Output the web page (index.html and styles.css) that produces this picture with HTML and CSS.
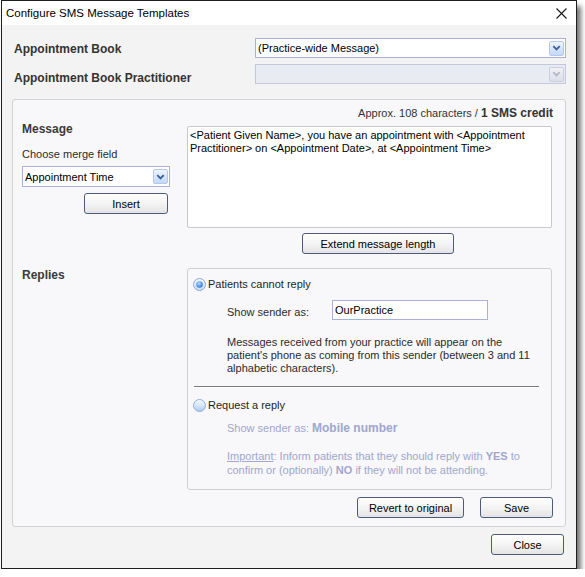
FILE: index.html
```html
<!DOCTYPE html>
<html>
<head>
<meta charset="utf-8">
<title>Configure SMS Message Templates</title>
<link rel="stylesheet" href="styles.css">
</head>
<body>
<div class="window">
  <div class="titlebar">
    <span class="title">Configure SMS Message Templates</span>
    <svg class="close" width="11" height="11" viewBox="0 0 11 11"><path d="M0.5 0.5 L10.5 10.5 M10.5 0.5 L0.5 10.5" stroke="#1a1a1a" stroke-width="1.1" fill="none"/></svg>
  </div>
  <div class="rows">
    <div class="row">
      <span class="label l1">Appointment Book</span>
      <div class="combo wide">
        <span class="combo-text">(Practice-wide Message)</span>
        <span class="drop"><svg width="9" height="6" viewBox="0 0 9 6"><path d="M1.3 1.2 L4.5 4.4 L7.7 1.2" stroke="#3f5f98" stroke-width="1.9" fill="none"/></svg></span>
      </div>
    </div>
    <div class="row">
      <span class="label l2">Appointment Book Practitioner</span>
      <div class="combo wide disabled">
        <span class="combo-text"></span>
        <span class="drop"><svg width="9" height="6" viewBox="0 0 9 6"><path d="M1.3 1.2 L4.5 4.4 L7.7 1.2" stroke="#b4b8c8" stroke-width="1.9" fill="none"/></svg></span>
      </div>
    </div>
  </div>

  <div class="panel">
    <div class="approx">Approx. 108 characters / <b>1 SMS credit</b></div>
    <div class="grid">
      <div class="msg-left">
        <div class="section-title">Message</div>
        <div class="choose">Choose merge field</div>
        <div class="combo merge">
          <span class="combo-text">Appointment Time</span>
          <span class="drop"><svg width="9" height="6" viewBox="0 0 9 6"><path d="M1.3 1.2 L4.5 4.4 L7.7 1.2" stroke="#3f5f98" stroke-width="1.9" fill="none"/></svg></span>
        </div>
        <button class="btn insert">Insert</button>
      </div>
      <div class="msg-right">
        <div class="textbox">&lt;Patient Given Name&gt;, you have an appointment with &lt;Appointment Practitioner&gt; on &lt;Appointment Date&gt;, at &lt;Appointment Time&gt;</div>
        <button class="btn extend">Extend message length</button>
      </div>

      <div class="section-title">Replies</div>
      <div class="replies-box">
        <div class="radio-row">
          <svg class="radio" width="13" height="13" viewBox="0 0 13 13">
            <defs>
              <linearGradient id="ring" x1="0" y1="0" x2="0" y2="1"><stop offset="0" stop-color="#f3f7fd"/><stop offset="1" stop-color="#c9dbf3"/></linearGradient>
              <radialGradient id="dot" cx="0.4" cy="0.35" r="0.65"><stop offset="0" stop-color="#b6dcff"/><stop offset="1" stop-color="#2c76d6"/></radialGradient>
            </defs>
            <circle cx="6.5" cy="6.5" r="6" fill="url(#ring)" stroke="#8fa8cf"/>
            <circle cx="6.5" cy="6.5" r="3.3" fill="url(#dot)"/>
          </svg>
          <span>Patients cannot reply</span>
        </div>
        <div class="sender-row">
          <span class="sender-label">Show sender as:</span>
          <div class="input">OurPractice</div>
        </div>
        <div class="note">Messages received from your practice will appear on the<br>patient's phone as coming from this sender (between 3 and 11<br>alphabetic characters).</div>
        <div class="sep"></div>
        <div class="radio-row r2">
          <svg class="radio" width="13" height="13" viewBox="0 0 13 13">
            <defs>
              <linearGradient id="ball" x1="0" y1="0" x2="0" y2="1"><stop offset="0" stop-color="#f4f9ff"/><stop offset="0.5" stop-color="#d6e6fa"/><stop offset="1" stop-color="#a9c7ee"/></linearGradient>
            </defs>
            <circle cx="6.5" cy="6.5" r="6" fill="url(#ball)" stroke="#93aed6"/>
          </svg>
          <span>Request a reply</span>
        </div>
        <div class="dim sender2">Show sender as: <b>Mobile number</b></div>
        <div class="dim important"><u>Important</u>: Inform patients that they should reply with <b>YES</b> to<br>confirm or (optionally) <b>NO</b> if they will not be attending.</div>
      </div>
    </div>
    <div class="actions">
      <button class="btn revert">Revert to original</button>
      <button class="btn save">Save</button>
    </div>
  </div>

  <div class="footer">
    <button class="btn closebtn">Close</button>
  </div>
</div>
</body>
</html>
```

FILE: styles.css
```css
body {
  margin: 0;
  background: #ffffff;
  font-family: "Liberation Sans", Arial, sans-serif;
  font-size: 11px;
  color: #2b2b2b;
}

.window {
  margin-left: 1px;
  width: 576px;
  height: 569px;
  box-sizing: border-box;
  border: 1px solid #1e1e1e;
  background: #f3f3f3;
  box-shadow: 4px 6px 5px rgba(0, 0, 0, 0.55);
  display: flex;
  flex-direction: column;
}

.titlebar {
  height: 24px;
  flex: none;
  background: #ffffff;
  display: flex;
  align-items: center;
  justify-content: space-between;
  padding: 0 9px 0 4px;
}

.title {
  font-size: 11.5px;
  color: #000000;
}

.rows {
  padding: 13px 0 0 12px;
  display: flex;
  flex-direction: column;
  gap: 6px;
}

.row {
  display: flex;
  height: 20px;
}

.label {
  width: 241px;
  flex: none;
  font-weight: bold;
  font-size: 12px;
  line-height: 14px;
  color: #333333;
  white-space: nowrap;
}

.label.l1 { padding-top: 4px; }
.label.l2 { padding-top: 7px; }

.combo {
  box-sizing: border-box;
  height: 20px;
  border: 1px solid #a9b1d8;
  background: #ffffff;
  display: flex;
  align-items: center;
}

.combo.wide { width: 311px; }

.combo.disabled {
  background: #e9ebf3;
  border-color: #c3c8de;
}

.combo-text {
  flex: 1;
  padding-left: 2px;
  color: #000000;
  white-space: nowrap;
}

.drop {
  width: 15px;
  height: 15px;
  margin-right: 1px;
  box-sizing: border-box;
  border: 1px solid #b5c8ea;
  border-radius: 2px;
  background: linear-gradient(#edf4fe, #c3d8f7);
  display: flex;
  align-items: center;
  justify-content: center;
}

.combo.disabled .drop {
  border-color: #cacedd;
  background: linear-gradient(#f0f1f6, #dcdfe9);
}

.panel {
  margin: 15px 10px 0 10px;
  height: 428px;
  box-sizing: border-box;
  border: 1px solid #d2d2d2;
  border-radius: 3px;
  background: #f8f8fa;
  padding: 6px 12px 0 9px;
}

.approx {
  text-align: right;
  line-height: 14px;
  color: #333333;
  margin-bottom: 2px;
  white-space: nowrap;
}

.approx b { font-size: 12px; }

.grid {
  display: grid;
  grid-template-columns: 165px 366px;
  row-gap: 14px;
}

.section-title {
  font-weight: bold;
  font-size: 12px;
  line-height: 14px;
  color: #3a3a3a;
}

.choose {
  margin-top: 11px;
  line-height: 14px;
}

.combo.merge {
  width: 148px;
  height: 21px;
  margin-top: 5px;
}

.btn {
  display: block;
  box-sizing: border-box;
  height: 21px;
  padding: 0;
  border: 1px solid #4b5b78;
  border-radius: 3px;
  background: linear-gradient(#ffffff, #f4f4f4 50%, #e4e4e4);
  font-family: "Liberation Sans", Arial, sans-serif;
  font-size: 11px;
  color: #000000;
}

.insert {
  margin-top: 6px;
  margin-left: 62px;
  width: 84px;
}

.msg-right {
  padding-top: 4px;
}

.textbox {
  width: 365px;
  height: 102px;
  box-sizing: border-box;
  border: 1px solid #c9c9c9;
  border-radius: 2px;
  background: #ffffff;
  padding: 2px 2px;
  line-height: 13px;
  color: #000000;
}

.extend {
  margin-top: 5px;
  margin-left: 115px;
  width: 152px;
}

.replies-box {
  width: 365px;
  height: 222px;
  box-sizing: border-box;
  border: 1px solid #d0d0d0;
  border-radius: 3px;
  background: #f8f8fa;
  padding: 8px 0 0 5px;
}

.radio-row {
  display: flex;
  align-items: center;
  gap: 2px;
  height: 14px;
  color: #1e1e1e;
}

.radio { flex: none; }

.sender-row {
  display: flex;
  margin-top: 9px;
  margin-left: 34px;
  height: 20px;
}

.sender-label {
  width: 105px;
  padding-top: 5px;
  line-height: 14px;
}

.input {
  width: 156px;
  height: 20px;
  box-sizing: border-box;
  border: 1px solid #a9b1d8;
  background: #ffffff;
  padding-left: 2px;
  line-height: 18px;
  color: #000000;
}

.note {
  margin-top: 16px;
  margin-left: 34px;
  line-height: 13px;
  white-space: nowrap;
}

.sep {
  margin: 11px 0 0 1px;
  width: 345px;
  height: 1px;
  background: #7b7b7b;
  border-bottom: 1px solid #ffffff;
}

.radio-row.r2 { margin-top: 10px; }

.dim {
  color: #a0a6cc;
  margin-left: 34px;
  line-height: 14px;
  white-space: nowrap;
}

.sender2 { margin-top: 9px; }
.sender2 b { font-size: 12px; }

.important { margin-top: 14px; }

.actions {
  display: flex;
  justify-content: flex-end;
  gap: 16px;
  margin-top: 7px;
}

.revert { width: 107px; }
.save { width: 73px; }

.footer {
  display: flex;
  justify-content: flex-end;
  margin: 7px 12px 0 0;
}

.closebtn { width: 73px; }
```
